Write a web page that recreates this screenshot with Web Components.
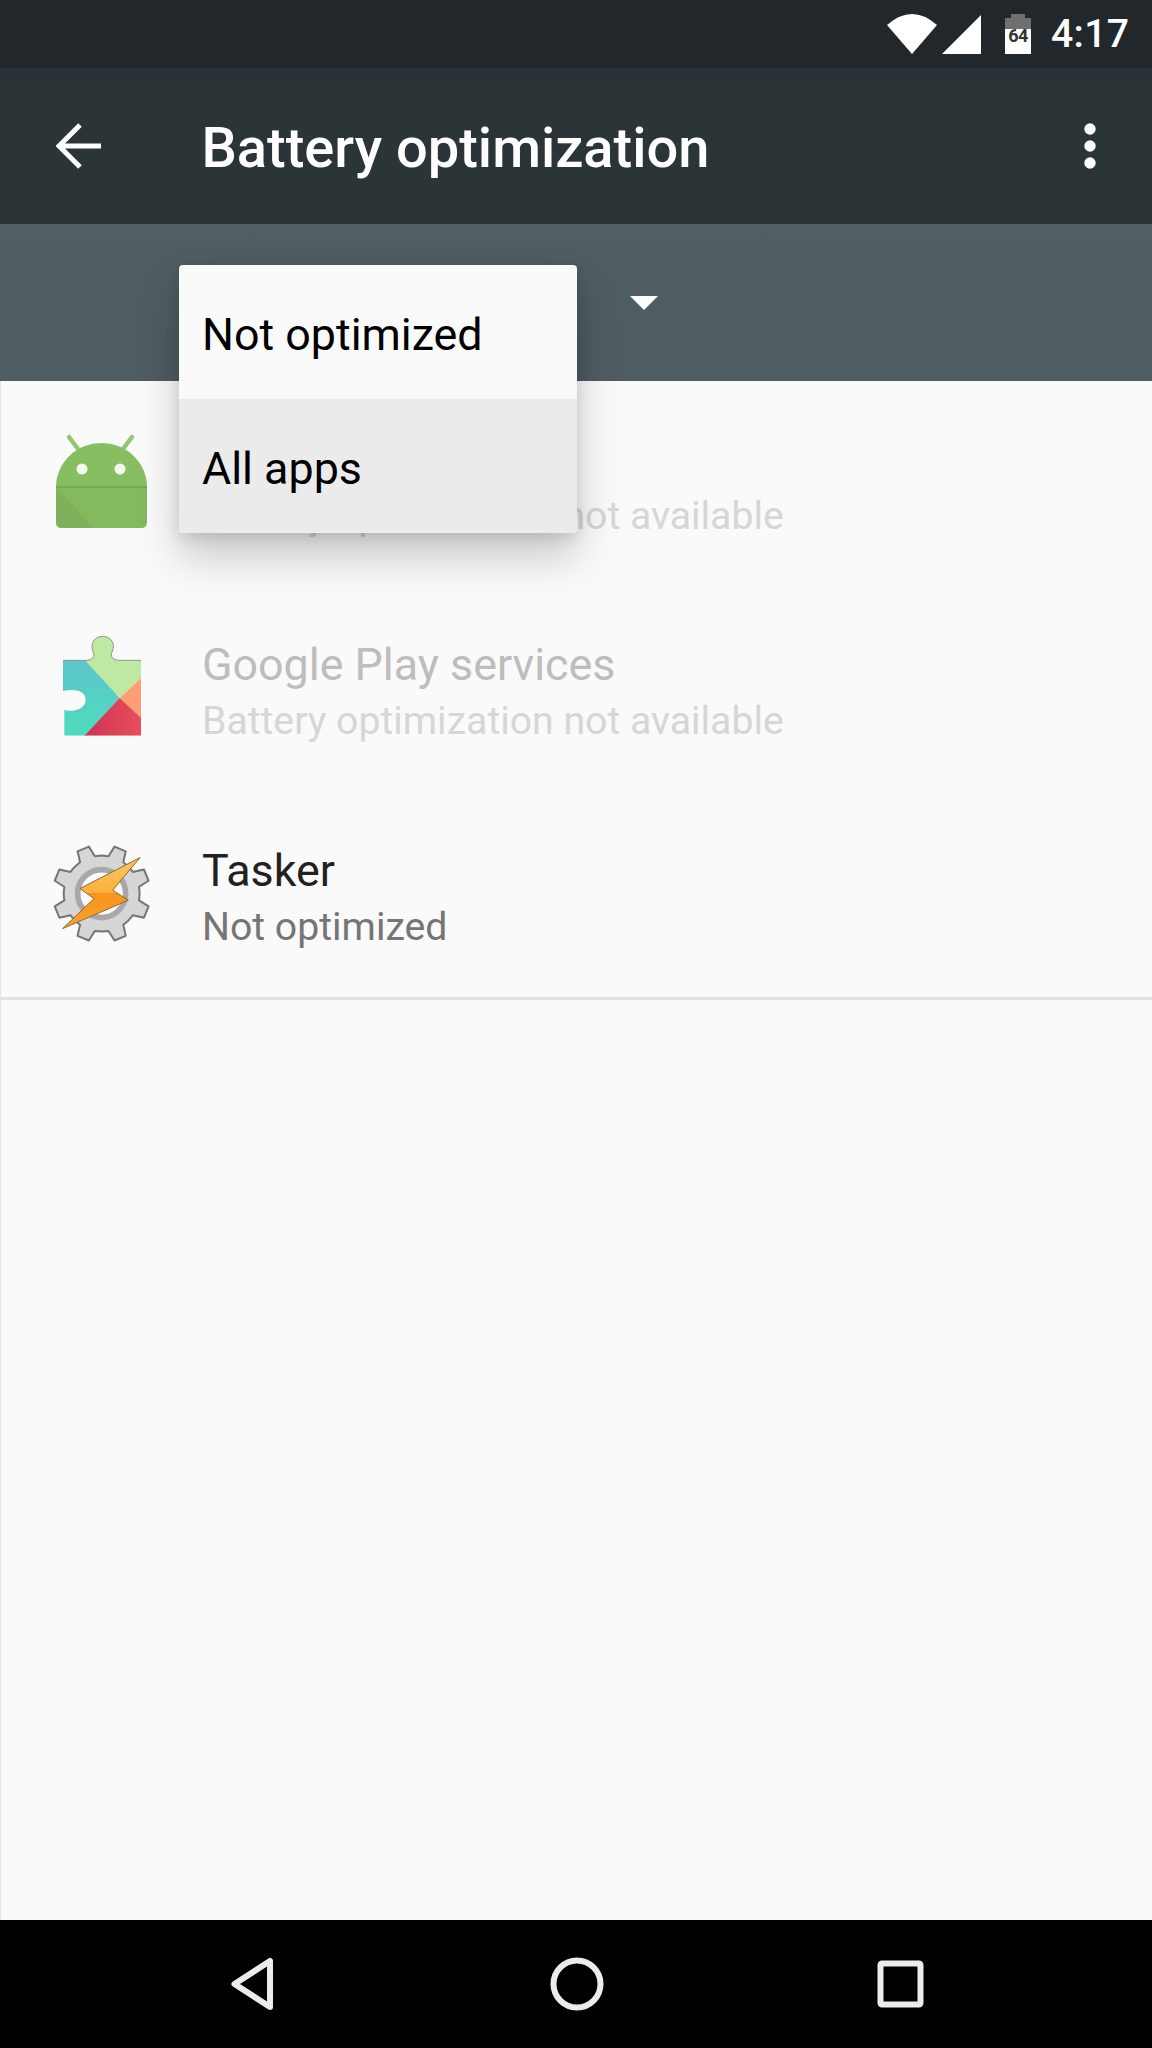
<!DOCTYPE html>
<html><head><meta charset="utf-8">
<style>
html,body{margin:0;padding:0;background:#fafafa;}
body{width:1152px;height:2048px;overflow:hidden;font-family:Roboto,"Liberation Sans",sans-serif;}
settings-page{display:flex;}
</style></head><body>
<settings-page>
  <status-bar slot="top" time="4:17"></status-bar>
  <app-toolbar slot="top" heading="Battery optimization"></app-toolbar>
  <filter-bar slot="top">
    <drop-menu>
      <menu-option>Not optimized</menu-option>
      <menu-option selected>All apps</menu-option>
    </drop-menu>
  </filter-bar>
  <app-row sub="Battery optimization not available" disabled-sub><icon-android slot="icon"></icon-android></app-row>
  <app-row heading="Google Play services" sub="Battery optimization not available" disabled-all><icon-play slot="icon"></icon-play></app-row>
  <app-row heading="Tasker" sub="Not optimized"><icon-tasker slot="icon"></icon-tasker></app-row>
  <nav-bar slot="bottom"></nav-bar>
</settings-page>
<script>
function def(name, html, extra){
  customElements.define(name, class extends HTMLElement{
    constructor(){super();const r=this.attachShadow({mode:'open'});r.innerHTML=typeof html==='function'?html(this):html;}
    connectedCallback(){ if(extra) extra(this); }
  });
}
def('settings-page',`<style>
:host{display:flex;flex-direction:column;width:1152px;height:2048px;background:#fafafa;}
.list{flex:1;display:flex;flex-direction:column;border-left:1px solid #e4e4e4;min-height:0;}
.rows{border-bottom:3px solid #e2e2e2;height:619px;box-sizing:border-box;}
</style><slot name="top"></slot><div class="list"><div class="rows"><slot></slot></div></div><slot name="bottom"></slot>`);

def('status-bar',`<style>
:host{display:flex;height:68px;background:#21272b;align-items:center;justify-content:flex-end;box-sizing:border-box;padding:0 22.700px 0 0;color:#fff;}
svg{display:block}
.wifi{margin-right:5px;margin-top:-1px}
.sig{margin-right:23px}
.batt{position:relative;width:26px;height:40px;margin-right:20px;}
.batt span{position:absolute;left:0;right:0;top:13px;text-align:center;font:700 18px/18px "Roboto",sans-serif;letter-spacing:-.5px;color:#333;}
.t{font:500 39.2px/44px Roboto,sans-serif;letter-spacing:.3px;}
</style>
<svg class="wifi" width="50" height="40" viewBox="0 0 50 40"><path d="M0 11 Q25 -11 50 11 L25 40Z" fill="#fff"/></svg>
<svg class="sig" width="40" height="40" viewBox="0 0 40 40"><path d="M0 40L39 1V40Z" fill="#fff"/></svg>
<div class="batt"><svg width="26" height="40" viewBox="0 0 26 40"><path d="M6 0H20V4H26V15H0V4H6Z" fill="#6f6f6f"/><rect y="15" width="26" height="25" fill="#fff"/></svg><span>64</span></div>
<div class="t"></div>`, el=>{el.shadowRoot.querySelector('.t').textContent=el.getAttribute('time');});

def('app-toolbar',`<style>
:host{display:flex;height:156px;align-items:center;background:linear-gradient(#283035,#2b3437 12%,#2b3437);position:relative;z-index:2;}
.back{width:46px;height:46px;margin-left:56px;flex:none}
h1{margin:4px 0 0 99.500px;flex:1;font:500 56px/64px Roboto,sans-serif;color:#fff;}
.more{width:12px;height:46px;margin-right:56px;flex:none}
</style>
<svg class="back" viewBox="0 0 46 46"><path d="M45 23H4M24 2L3 23L24 44" fill="none" stroke="#fff" stroke-width="5"/></svg>
<h1></h1>
<svg class="more" viewBox="0 0 12 46"><circle cx="6" cy="6" r="5.700" fill="#fff"/><circle cx="6" cy="23" r="5.700" fill="#fff"/><circle cx="6" cy="40" r="5.700" fill="#fff"/></svg>`, el=>{el.shadowRoot.querySelector('h1').textContent=el.getAttribute('heading');});

def('filter-bar',`<style>
:host{display:flex;height:157px;background:linear-gradient(#545f66,#4f5c61 18%,#4f5c61);position:relative;z-index:3;box-sizing:border-box;padding:72px 0 0 630px;}
svg{display:block}
</style><svg width="28" height="14" viewBox="0 0 28 14"><path d="M0 0H28L14 14Z" fill="#fff"/></svg><slot></slot>`);

def('drop-menu',`<style>
:host{position:absolute;left:179px;top:41px;width:398px;height:268px;display:flex;flex-direction:column;background:#fafafa;border-radius:4px;overflow:hidden;box-shadow:0 24px 44px rgba(0,0,0,.2),0 6px 14px rgba(0,0,0,.1);}
</style><slot></slot>`);

def('menu-option',`<style>
:host{display:flex;flex:1;align-items:center;box-sizing:border-box;padding:5px 0 0 23px;font:400 44.8px/54px Roboto,sans-serif;color:#000;}
:host([selected]){background:#ebebeb;}
</style><slot></slot>`);

def('app-row',`<style>
:host{display:flex;height:205.500px;align-items:center;box-sizing:border-box;}
.ic{width:201px;height:120px;flex:none;}
.tx{flex:1;margin-top:8px}
.a{font:400 44.8px/56px Roboto,sans-serif;color:#212121;min-height:56px;}
.b{font:400 39.2px/56px Roboto,sans-serif;color:#757575;}
:host([disabled-all]) .a{color:#bdbdbd}
:host([disabled-all]) .b,:host([disabled-sub]) .b{color:#d6d6d6}
</style><div class="ic"><slot name="icon"></slot></div><div class="tx"><div class="a"></div><div class="b"></div></div>`,el=>{
  const s=el.shadowRoot; s.querySelector('.a').textContent=el.getAttribute('heading')||'\u00a0'; s.querySelector('.b').textContent=el.getAttribute('sub');
});

def('icon-android',`<style>:host{display:block;width:201px;height:120px}svg{display:block;overflow:visible}</style>
<svg width="201" height="120" viewBox="0 0 201 120">
<g transform="translate(-1,-30)">
<path d="M69 43L78 55M132 43L123 55" stroke="#95c576" stroke-width="4.500" stroke-linecap="round" fill="none"/>
<path d="M56 93A45.500 44 0 0 1 147 93Z" fill="#88be62"/>
<path d="M56 93H147V128Q147 134 141 134H62Q56 134 56 128Z" fill="#84ba5e"/>
<path d="M58 94.500L93 134H62Q56 134 56 128V94.500Z" fill="#7eb25a"/>
<path d="M56 92H147V94H56Z" fill="#75aa53"/>
<circle cx="82" cy="75" r="5.500" fill="#f5f8f0"/><circle cx="120" cy="75" r="5.500" fill="#f5f8f0"/>
</g></svg>`);

def('icon-play',`<style>:host{display:block;width:201px;height:120px}svg{display:block}</style>
<svg width="201" height="120" viewBox="0 0 201 120">
<defs><linearGradient id="te" x1="0" y1="0" x2="0" y2="1"><stop offset="0" stop-color="#5cc5cc"/><stop offset="1" stop-color="#4fdcbb"/></linearGradient>
<linearGradient id="re" x1="0" y1="0" x2="1" y2="0"><stop offset="0" stop-color="#cf2f55"/><stop offset="1" stop-color="#e8505c"/></linearGradient></defs>
<g transform="translate(62,8) scale(.3333)">
<g transform="translate(-68,-52)">
<clipPath id="pz"><path d="M68 122H130C158 124 166 110 158 95C148 72 163 50 187 50C212 50 226 72 216 95C208 110 216 124 245 122H302V348H72V271C100 278 136 268 136 240C136 212 100 206 68 214Z"/></clipPath>
<g clip-path="url(#pz)">
<path d="M60 110L135 110L238 235L130 360H60Z" fill="url(#te)"/>
<path d="M135 40H310V170L238 235L130 118Z" fill="#bfe8a3"/>
<path d="M310 168V302L238 235Z" fill="#ff9e73"/>
<path d="M238 235L310 302V360H122Z" fill="url(#re)"/>
</g>
<path d="M68 122H130C158 124 166 110 158 95C148 72 163 50 187 50C212 50 226 72 216 95C208 110 216 124 245 122H302" fill="none" stroke="#8c9a80" stroke-width="3"/>
</g></g></svg>`);

function gear(cx,cy,ro,ri,n){
  let d='';const step=2*Math.PI/n;
  for(let k=0;k<n;k++){
    const a=-Math.PI/2+step/2+k*step;
    const pts=[[a-step*.5,ri],[a-step*.27,ri],[a-step*.16,ro],[a+step*.16,ro],[a+step*.27,ri]];
    pts.forEach((p,i)=>{d+=(k===0&&i===0?'M':'L')+(cx+Math.cos(p[0])*p[1]).toFixed(1)+' '+(cy+Math.sin(p[0])*p[1]).toFixed(1);});
  }
  return d+'Z';
}
def('icon-tasker',`<style>:host{display:block;width:201px;height:120px}svg{display:block}</style>
<svg width="201" height="120" viewBox="0 0 201 120">
<defs><linearGradient id="b" x1="0" y1="0" x2="0" y2="1"><stop offset="0" stop-color="#fcc862"/><stop offset=".5" stop-color="#fbb03b"/><stop offset=".5" stop-color="#f7941d"/><stop offset="1" stop-color="#f9a12e"/></linearGradient></defs>
<g transform="translate(39,-4.750) scale(.3333)">
<path d="${gear(185,190,146,114,8)}" fill="#d6d6d6" stroke="#757575" stroke-width="6" stroke-linejoin="round"/>
<circle cx="185" cy="190" r="72" fill="#fafafa" stroke="#a8a8a8" stroke-width="17"/>
<path d="M300 82L120 175L162 205L68 295L265 210L218 180Z" fill="url(#b)" stroke="#8a6a35" stroke-width="3" stroke-linejoin="round"/>
</g></svg>`);

def('nav-bar',`<style>
:host{display:flex;height:128px;background:#000;position:relative;flex:none;}
svg{position:absolute;top:0;left:0}
</style><svg width="1152" height="128" viewBox="0 0 1152 128" fill="none" stroke="#ececec" stroke-width="6" stroke-linejoin="round">
<path d="M270 41V87L234.500 64Z"/>
<circle cx="577" cy="64" r="23.500"/>
<rect x="880.500" y="43.500" width="40" height="41" rx="1.500"/>
</svg>`);
</script>
</body></html>
